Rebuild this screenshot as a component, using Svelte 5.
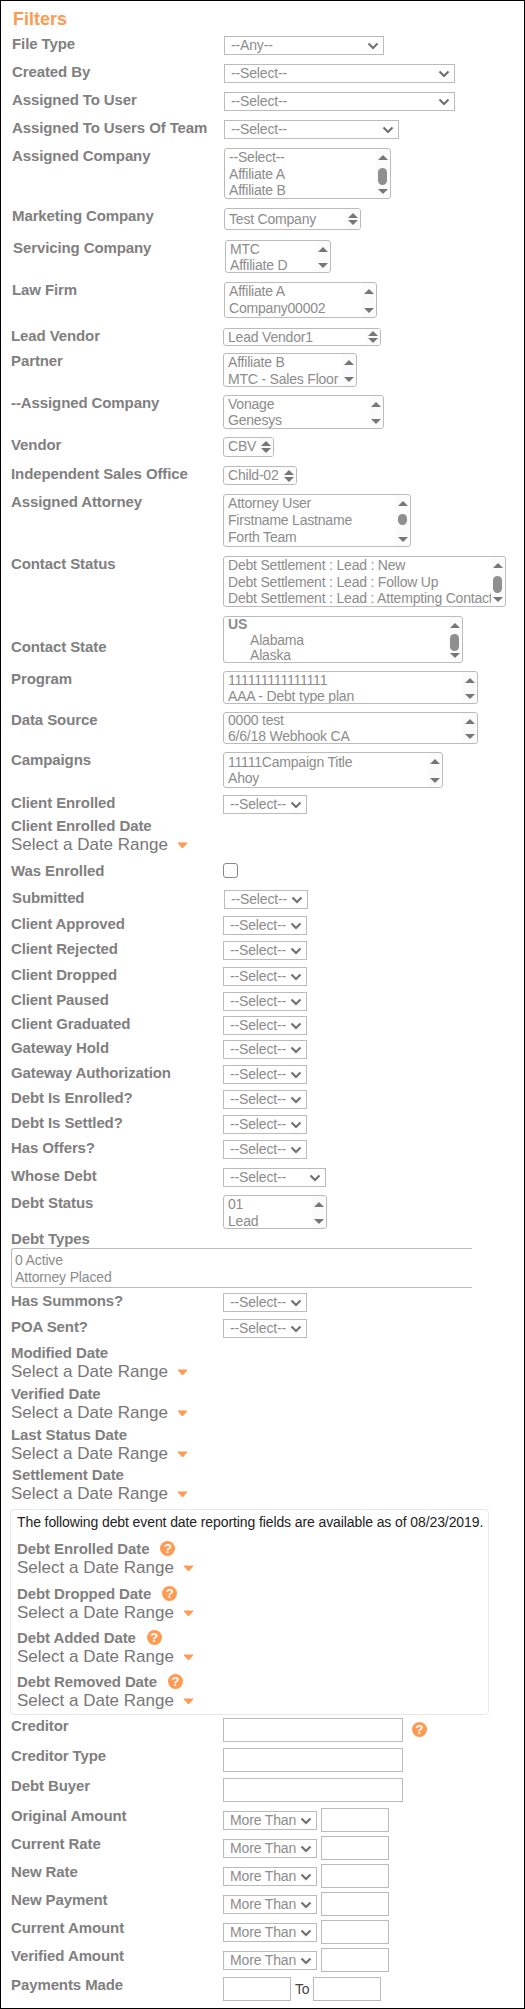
<script>
    const DR = 'Select a Date Range';
    const SEL = '--Select--';

    // y = top edge of the row on the page, the row height is the distance to the next one
    const upper = [
        { y: 36, label: 'File Type', kind: 'select', text: '--Any--', w: 160, ind: 1 },
        { y: 64, label: 'Created By', kind: 'select', text: SEL, w: 231, ind: 1 },
        { y: 92, label: 'Assigned To User', kind: 'select', text: SEL, w: 231, ind: 1 },
        { y: 120, label: 'Assigned To Users Of Team', kind: 'select', text: SEL, w: 175, ind: 1 },
        { y: 148, label: 'Assigned Company', kind: 'list', items: [SEL, 'Affiliate A', 'Affiliate B'], w: 167, h: 51, thumb: [19, 17], lh: 16.5, ind: 1 },
        { y: 208, label: 'Marketing Company', kind: 'spin', text: 'Test Company', w: 137, h: 22, pad: 2, ind: 1 },
        { y: 240, label: 'Servicing Company', kind: 'list', items: ['MTC', 'Affiliate D'], w: 106, h: 33, lh: 16, ind: 1, lab: 1 },
        { y: 282, label: 'Law Firm', kind: 'list', items: ['Affiliate A', 'Company00002'], w: 153, h: 36, lh: 17, ind: 1 },
        { y: 328, label: 'Lead Vendor', kind: 'spin', text: 'Lead Vendor1', w: 158, h: 18 },
        { y: 353, label: 'Partner', kind: 'list', items: ['Affiliate B', 'MTC - Sales Floor'], w: 134, h: 34, lh: 17 },
        { y: 395, label: '--Assigned Company', kind: 'list', items: ['Vonage', 'Genesys'], w: 161, h: 34, lh: 16 },
        { y: 437, label: 'Vendor', kind: 'spin', text: 'CBV', w: 51, h: 20 },
        { y: 466, label: 'Independent Sales Office', kind: 'spin', text: 'Child-02', w: 74, h: 19 },
        { y: 494, label: 'Assigned Attorney', kind: 'list', items: ['Attorney User', 'Firstname Lastname', 'Forth Team'], w: 188, h: 53, thumb: [19, 11], lh: 17 },
        { y: 556, label: 'Contact Status', kind: 'list', items: ['Debt Settlement : Lead : New', 'Debt Settlement : Lead : Follow Up', 'Debt Settlement : Lead : Attempting Contact'], w: 283, h: 51, thumb: [19, 17], lh: 16.5 },
        { y: 616, label: 'Contact State', kind: 'states', w: 240, h: 47, thumb: [17, 17], lh: 15.5, low: 1 },
        { y: 671, label: 'Program', kind: 'list', items: ['111111111111111', 'AAA - Debt type plan'], w: 255, h: 33, lh: 16 },
        { y: 712, label: 'Data Source', kind: 'list', items: ['0000 test', '6/6/18 Webhook CA'], w: 255, h: 32, lh: 15.5 },
        { y: 752, label: 'Campaigns', kind: 'list', items: ['11111Campaign Title', 'Ahoy'], w: 220, h: 36, lh: 15.5, pad: 2 },
        { y: 795, label: 'Client Enrolled', kind: 'select', text: SEL, w: 84 },
        { y: 818, label: 'Client Enrolled Date', kind: 'date' },
        { y: 863, label: 'Was Enrolled', kind: 'check' },
        { y: 890, label: 'Submitted', kind: 'select', text: SEL, w: 84, lab: 1 },
        { y: 916, label: 'Client Approved', kind: 'select', text: SEL, w: 84 },
        { y: 941, label: 'Client Rejected', kind: 'select', text: SEL, w: 84 },
        { y: 967, label: 'Client Dropped', kind: 'select', text: SEL, w: 84 },
        { y: 992, label: 'Client Paused', kind: 'select', text: SEL, w: 84 },
        { y: 1016, label: 'Client Graduated', kind: 'select', text: SEL, w: 84 },
        { y: 1040, label: 'Gateway Hold', kind: 'select', text: SEL, w: 84 },
        { y: 1065, label: 'Gateway Authorization', kind: 'select', text: SEL, w: 84 },
        { y: 1090, label: 'Debt Is Enrolled?', kind: 'select', text: SEL, w: 84 },
        { y: 1115, label: 'Debt Is Settled?', kind: 'select', text: SEL, w: 84 },
        { y: 1140, label: 'Has Offers?', kind: 'select', text: SEL, w: 84 },
        { y: 1168, label: 'Whose Debt', kind: 'select', text: SEL, w: 103 },
        { y: 1195, label: 'Debt Status', kind: 'list', items: ['01', 'Lead'], w: 104, h: 34, lh: 17 },
        { y: 1231, label: 'Debt Types', kind: 'types' },
        { y: 1293, label: 'Has Summons?', kind: 'select', text: SEL, w: 84 },
        { y: 1319, label: 'POA Sent?', kind: 'select', text: SEL, w: 84 },
        { y: 1345, label: 'Modified Date', kind: 'date' },
        { y: 1386, label: 'Verified Date', kind: 'date' },
        { y: 1427, label: 'Last Status Date', kind: 'date' },
        { y: 1467, label: 'Settlement Date', kind: 'date', lab: 1 },
        { y: 1509 }
    ];

    const events = [
        { label: 'Debt Enrolled Date', h: 45 },
        { label: 'Debt Dropped Date', h: 44 },
        { label: 'Debt Added Date', h: 44 },
        { label: 'Debt Removed Date', h: 40 }
    ];

    const lower = [
        { y: 1718, label: 'Creditor', kind: 'text', help: 1 },
        { y: 1748, label: 'Creditor Type', kind: 'text' },
        { y: 1778, label: 'Debt Buyer', kind: 'text' },
        { y: 1808, label: 'Original Amount', kind: 'amount' },
        { y: 1836, label: 'Current Rate', kind: 'amount' },
        { y: 1864, label: 'New Rate', kind: 'amount' },
        { y: 1892, label: 'New Payment', kind: 'amount' },
        { y: 1920, label: 'Current Amount', kind: 'amount' },
        { y: 1948, label: 'Verified Amount', kind: 'amount' },
        { y: 1977, label: 'Payments Made', kind: 'payments' },
        { y: 2008 }
    ];

    const withHeight = (rows) => rows.slice(0, -1).map((r, i) => ({ ...r, rowH: rows[i + 1].y - r.y }));
    const upperRows = withHeight(upper);
    const lowerRows = withHeight(lower);
</script>

{#snippet chevron()}
    <svg class="chev" width="12" height="8" viewBox="0 0 12 8"><polyline points="1.5,1.5 6,6 10.5,1.5" fill="none" stroke="#707070" stroke-width="2.1" /></svg>
{/snippet}

{#snippet caret()}
    <svg class="caret" width="11" height="7" viewBox="0 0 11 7"><path d="M1 1h9L5.5 6z" fill="#ff9a52" stroke="#ff9a52" stroke-linejoin="round" /></svg>
{/snippet}

{#snippet helpIcon()}
    <span class="help">?</span>
{/snippet}

{#snippet dropdown(text, w)}
    <span class="sel" style="width: {w}px">
        <select><option>{text}</option></select>
        {@render chevron()}
    </span>
{/snippet}

{#snippet scrollbar(thumb)}
    <span class="sbar">
        <i class="up"></i>
        {#if thumb}<b style="top: {thumb[0]}px; height: {thumb[1]}px"></b>{/if}
        <i class="down"></i>
    </span>
{/snippet}

{#snippet field(r)}
    {#if r.kind === 'select'}
        {@render dropdown(r.text, r.w)}
    {:else if r.kind === 'list'}
        <div class="list" style="width: {r.w}px; height: {r.h}px; line-height: {r.lh}px; padding-top: {r.pad || 0}px">
            {#each r.items as item}<div>{item}</div>{/each}
            {@render scrollbar(r.thumb)}
        </div>
    {:else if r.kind === 'states'}
        <div class="list" style="width: {r.w}px; height: {r.h}px; line-height: {r.lh}px">
            <div class="group">US</div>
            <div class="state">Alabama</div>
            <div class="state">Alaska</div>
            {@render scrollbar(r.thumb)}
        </div>
    {:else if r.kind === 'spin'}
        <div class="list spin" style="width: {r.w}px; height: {r.h}px; padding-top: {r.pad || 0}px">
            {r.text}
            <span class="arrows"><i class="up"></i><i class="down"></i></span>
        </div>
    {:else if r.kind === 'check'}
        <input class="check" type="checkbox" />
    {:else if r.kind === 'text'}
        <input class="wide" type="text" />
        {#if r.help}{@render helpIcon()}{/if}
    {:else if r.kind === 'amount'}
        <span class="more">{@render dropdown('More Than', 94)}</span>
        <input class="small" type="text" />
    {:else if r.kind === 'payments'}
        <input class="small" type="text" />
        <span class="to">To</span>
        <input class="small" type="text" />
    {/if}
{/snippet}

{#snippet row(r)}
    {#if r.kind === 'date'}
        <div class="stack" class:lab={r.lab} style="height: {r.rowH}px">
            <label>{r.label}</label>
            <div class="range">{DR}{@render caret()}</div>
        </div>
    {:else if r.kind === 'types'}
        <div class="stack" style="height: {r.rowH}px">
            <label>{r.label}</label>
            <div class="types">
                <div>0 Active</div>
                <div>Attorney Placed</div>
            </div>
        </div>
    {:else}
        <div class="row" class:ind={r.ind} style="height: {r.rowH}px">
            <label class:lab={r.lab} class:low={r.low}>{r.label}</label>
            <div class="ctl">{@render field(r)}</div>
        </div>
    {/if}
{/snippet}

<div class="panel">
    <h2>Filters</h2>
    {#each upperRows as r}
        {@render row(r)}
    {/each}

    <div class="events">
        <p>The following debt event date reporting fields are available as of 08/23/2019.</p>
        {#each events as e}
            <div class="event" style="height: {e.h}px">
                <label>{e.label}{@render helpIcon()}</label>
                <div class="range">{DR}{@render caret()}</div>
            </div>
        {/each}
    </div>

    <div class="lower">
        {#each lowerRows as r}
            {@render row(r)}
        {/each}
    </div>
</div>

<style>
    :global(body) {
        margin: 0;
        background: #fff;
    }

    .panel {
        box-sizing: border-box;
        width: 525px;
        height: 2009px;
        border: 1px solid #000;
        padding-left: 10px;
        font-family: "Liberation Sans", Arial, sans-serif;
        font-size: 14px;
        letter-spacing: -0.15px;
        color: #8c8c8c;
        overflow: hidden;
    }

    h2 {
        margin: 0 0 0 2px;
        height: 35px;
        font-size: 18px;
        line-height: 36px;
        font-weight: bold;
        letter-spacing: 0;
        color: #ff9a52;
    }

    label {
        display: block;
        padding-bottom: 2px;
        font-size: 15px;
        font-weight: bold;
        line-height: 15px;
        letter-spacing: -0.1px;
        color: #808080;
        white-space: nowrap;
    }

    .row {
        display: flex;
        align-items: flex-start;
    }

    .row.ind {
        margin-left: 1px;
    }

    .row label {
        width: 212px;
        flex: none;
    }

    label.lab,
    .stack.lab label {
        padding-left: 1px;
    }

    label.low {
        padding-top: 23px;
    }

    .ctl {
        display: flex;
        align-items: flex-start;
    }

    .sel {
        position: relative;
        display: block;
        height: 19px;
    }

    select {
        display: block;
        box-sizing: border-box;
        width: 100%;
        height: 19px;
        margin: 0;
        padding: 0 0 0 6px;
        appearance: none;
        border: 1px solid #bbb;
        border-radius: 0;
        background: #fff;
        font: 14px/17px "Liberation Sans", Arial, sans-serif;
        letter-spacing: -0.15px;
        color: #8c8c8c;
    }

    .chev {
        position: absolute;
        right: 5px;
        top: 6px;
        pointer-events: none;
    }

    .list {
        position: relative;
        box-sizing: border-box;
        padding-left: 4px;
        border: 1px solid #bbb;
        border-radius: 3px;
        background: #fff;
        letter-spacing: -0.2px;
        white-space: nowrap;
        overflow: hidden;
    }

    .spin {
        line-height: 16px;
    }

    .group {
        font-weight: bold;
    }

    .state {
        padding-left: 22px;
    }

    .sbar {
        position: absolute;
        top: 0;
        right: 1px;
        bottom: 0;
        width: 13px;
        padding: 6px 0 4px;
        box-sizing: border-box;
        display: flex;
        flex-direction: column;
        justify-content: space-between;
        align-items: center;
        background: #fbfbfb;
    }

    .sbar b {
        position: absolute;
        left: 2px;
        width: 9px;
        border-radius: 5px;
        background: #8f8f8f;
    }

    .up,
    .down {
        display: block;
        width: 0;
        height: 0;
        border-left: 5px solid transparent;
        border-right: 5px solid transparent;
    }

    .up {
        border-bottom: 5px solid #777;
    }

    .down {
        border-top: 5px solid #777;
    }

    .arrows {
        position: absolute;
        top: 0;
        right: 0;
        bottom: 0;
        width: 15px;
        display: flex;
        flex-direction: column;
        justify-content: center;
        align-items: center;
        gap: 2px;
        background: #fbfbfb;
    }

    .range {
        display: flex;
        align-items: center;
        height: 20px;
        font-size: 17px;
        line-height: 20px;
        letter-spacing: 0;
        color: #777;
        white-space: nowrap;
    }

    .caret {
        margin-left: 9px;
    }

    .types {
        box-sizing: border-box;
        width: 461px;
        height: 40px;
        padding: 3px 0 0 3px;
        border: 1px solid #bbb;
        border-right: 0;
        border-radius: 3px 0 0 3px;
        line-height: 17px;
    }

    .events {
        box-sizing: border-box;
        width: 479px;
        height: 206px;
        margin-left: -1px;
        padding-left: 6px;
        border: 1px solid #e8e8e8;
        border-radius: 4px;
    }

    .events p {
        margin: 0;
        height: 31px;
        line-height: 24px;
        letter-spacing: -0.1px;
        color: #222;
        white-space: nowrap;
    }

    .event label {
        display: flex;
        align-items: center;
    }

    .help {
        display: block;
        flex: none;
        width: 15px;
        height: 15px;
        margin-left: 11px;
        border-radius: 50%;
        background: #ff9a52;
        color: #fff;
        font-size: 13px;
        font-weight: bold;
        line-height: 15px;
        letter-spacing: 0;
        text-align: center;
    }

    .lower {
        margin-top: 3px;
    }

    .ctl > .help {
        margin: 4px 0 0 9px;
    }

    input[type="text"] {
        display: block;
        box-sizing: border-box;
        height: 24px;
        margin: 0;
        padding: 0;
        border: 1px solid #bbb;
        border-radius: 0;
        background: #fff;
    }

    .wide {
        width: 180px;
    }

    input.small {
        width: 68px;
    }

    .more {
        display: block;
        margin: 3px 4px 0 0;
    }

    .to {
        width: 22px;
        flex: none;
        line-height: 24px;
        padding-left: 4px;
        box-sizing: border-box;
        color: #444;
    }

    .check {
        display: block;
        box-sizing: border-box;
        width: 15px;
        height: 15px;
        margin: 0;
        appearance: none;
        border: 1.5px solid #888;
        border-radius: 3px;
        background: #fff;
    }
</style>
